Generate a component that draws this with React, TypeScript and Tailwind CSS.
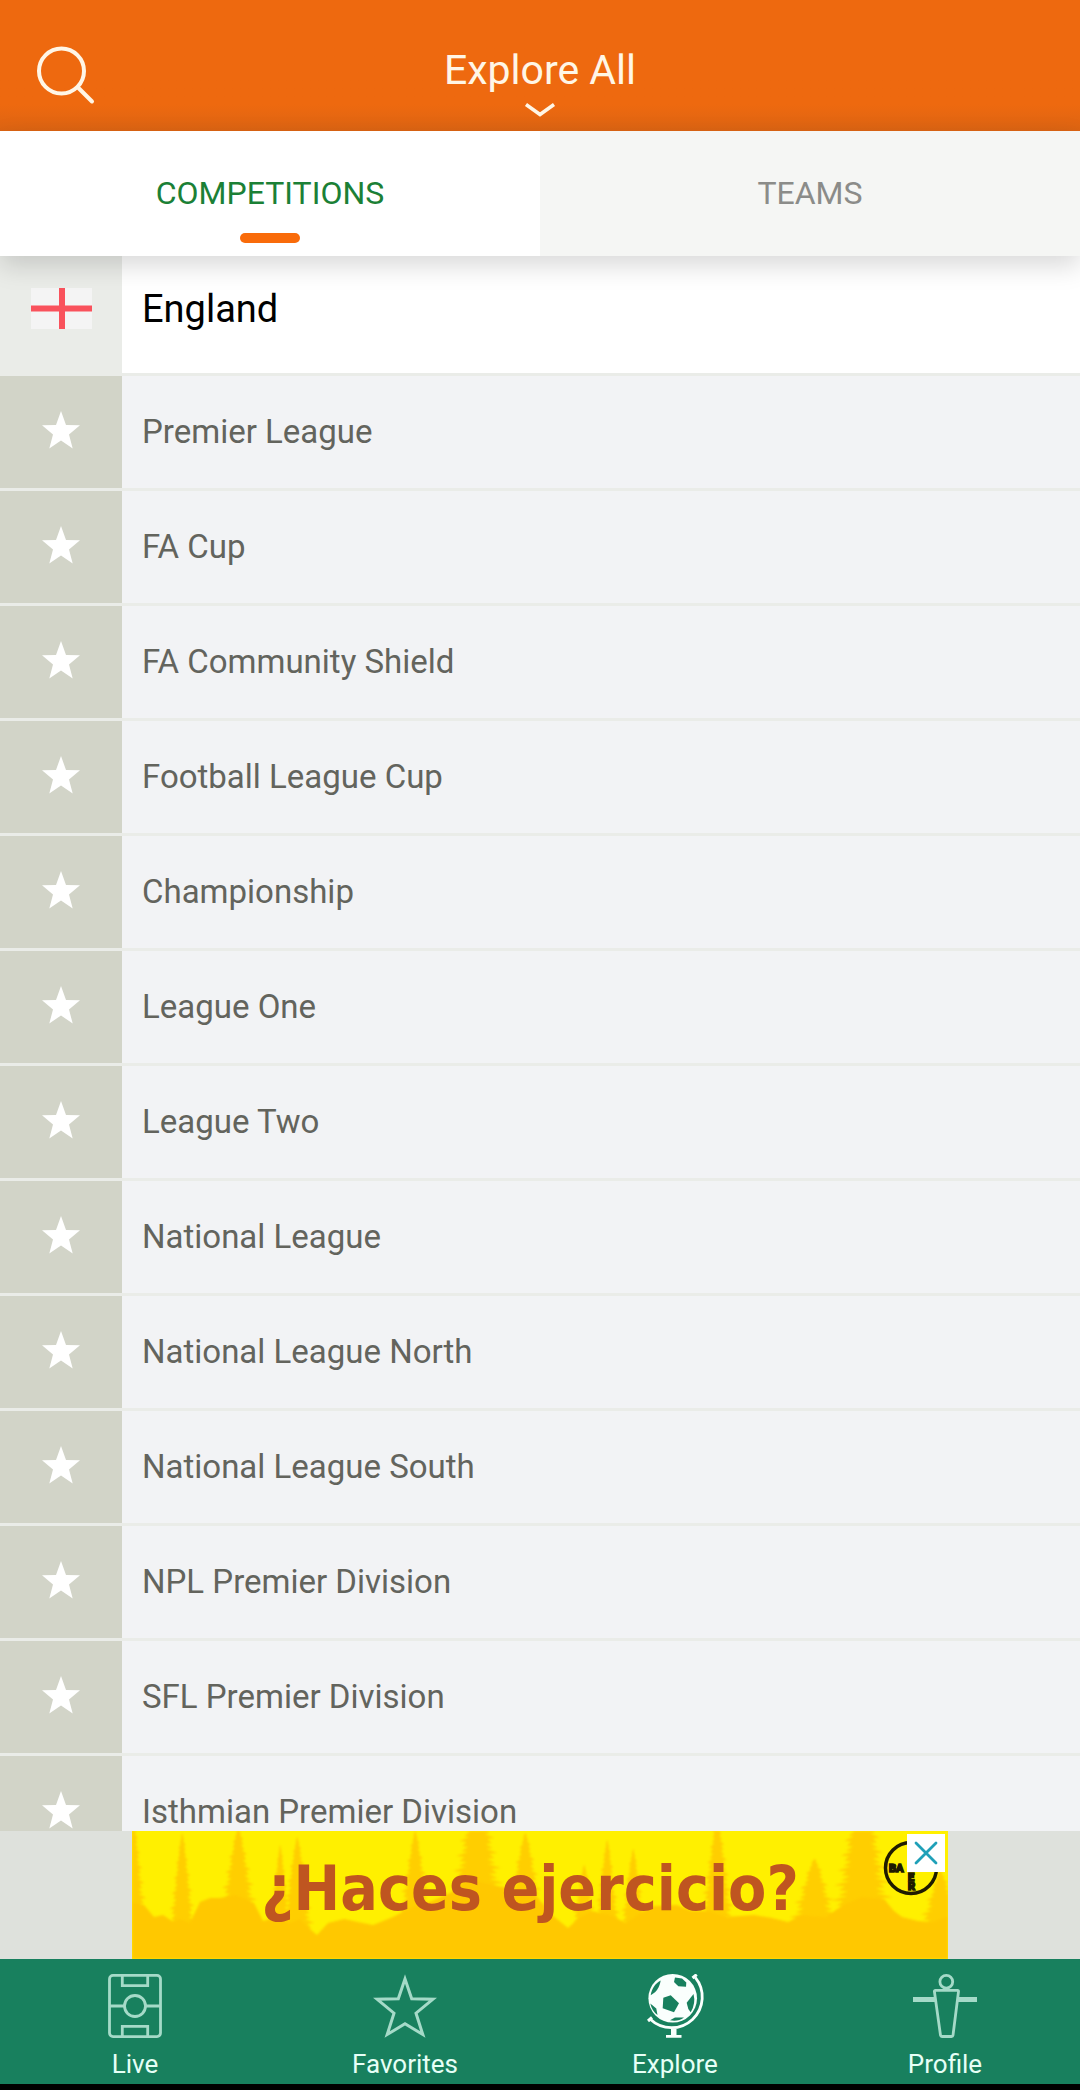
import { useState } from "react";
import type { ReactNode } from "react";
import clsx from "clsx";

const TABS = ["Competitions", "Teams"];

const COMPETITIONS = [
  "Premier League",
  "FA Cup",
  "FA Community Shield",
  "Football League Cup",
  "Championship",
  "League One",
  "League Two",
  "National League",
  "National League North",
  "National League South",
  "NPL Premier Division",
  "SFL Premier Division",
  "Isthmian Premier Division",
];

// [center x, top y, base y, half width]
const TREES = [
  [0, -20, 100, 18],
  [50, 2, 98, 15],
  [106, -4, 92, 23],
  [148, 14, 98, 12],
  [165, 6, 100, 18],
  [283, 0, 96, 20],
  [345, -50, 90, 34],
  [393, 2, 96, 24],
  [452, 34, 96, 14],
  [475, 9, 100, 15],
  [501, 18, 100, 15],
  [585, -14, 98, 20],
  [682, 28, 96, 28],
  [730, -50, 94, 36],
  [808, 40, 98, 24],
];

// ragged conifer outline: each branch tip juts out of the trunk side
function treePoints([cx, top, base, half]: number[]) {
  const steps = Math.round((base - top) / 5);
  const left: string[] = [];
  const right: string[] = [];
  for (let i = 1; i <= steps; i++) {
    const y = top + ((base - top) * i) / steps;
    const w = half * Math.pow(i / steps, 0.8) * (i % 3 ? 0.8 : 1);
    left.push(`${cx - w},${y}`, `${cx - w * 0.6},${y + 1}`);
    right.unshift(`${cx + w * 0.6},${y - 2}`, `${cx + w},${y - 3}`);
  }
  return [`${cx},${top}`, ...left, ...right].join(" ");
}

function SearchIcon() {
  return (
    <svg viewBox="0 0 60 60" className="size-15" fill="none" stroke="#fff6e6" strokeWidth="4" strokeLinecap="round">
      <circle cx="25.500" cy="26" r="22.500" />
      <path d="M42 42.500 56 56.500" />
    </svg>
  );
}

function PitchIcon() {
  return (
    <svg viewBox="0 0 64 64" className="size-16" fill="none" stroke="#a5dac8" strokeWidth="2.8">
      <rect x="6.500" y="1.400" width="51" height="61.200" rx="3.500" />
      <path d="M19.300 1.500v10.200h25.400V1.500M19.300 62.500V52.300h25.400v10.200M6.500 32h14.700M42.800 32h14.700" />
      <circle cx="32" cy="32" r="10.500" />
    </svg>
  );
}

function StarOutlineIcon() {
  return (
    <svg viewBox="0 0 64 64" className="size-16" fill="none" stroke="#a5dac8" strokeWidth="3">
      <path d="M32 5 38.700 24.800 60 25.200 43 39.200 49.800 60.500 32 49.800 14.200 60.500 21 39.200 4 25.200 25.300 24.800Z" />
    </svg>
  );
}

function GlobeIcon() {
  return (
    <svg viewBox="0 0 64 64" className="size-16">
      <circle cx="29.700" cy="24.300" r="24.300" fill="#fafffd" />
      <g fill="#18805e">
        <path d="M27.700 21.300 36 29.300 31 38.300 19.700 34.300 20.300 23.700Z" />
        <path d="M32 3.500 39 4.500 43.300 8.500 43 12.700 35.300 12.300 31 8Z" />
        <path d="M17.700 6.500C12 9.500 8.500 15 7.700 21.300L12 18.300Q16.500 14 17.700 6.500Z" />
        <path d="M50.500 20Q53 29.500 47.700 38.300L45.300 35 43.700 28.700Z" />
        <path d="M41 43.500Q35 48 27 46.300L32 43.500Z" />
        <path d="M7.300 29.500Q9 37 14.500 41L13.300 34.500Z" />
      </g>
      <path d="M52.200 3.300A30.800 30.800 0 0 1 7.300 45.300" fill="none" stroke="#fafffd" strokeWidth="2.8" />
      <path d="m49.500 4 4.200-3.500M5 47l4-3.500" stroke="#fafffd" strokeWidth="3" />
      <path d="M28 54.500h5.500V61h5v2.800H23V61h5Z" fill="#fafffd" />
    </svg>
  );
}

function PlayerIcon() {
  return (
    <svg viewBox="0 0 64 64" className="size-16" fill="none" stroke="#a5dac8" strokeWidth="2.8">
      <circle cx="33.300" cy="7.800" r="6.400" />
      <path d="M22.500 16.300h22a1 1 0 0 1 1 1.200L40 61.300a1.500 1.500 0 0 1-1.500 1.200h-9.500a1.500 1.500 0 0 1-1.500-1.200L21.400 17.500a1 1 0 0 1 1.100-1.200Z" />
      <path d="M0 25.500h22M45 25.500h19" strokeWidth="5" />
    </svg>
  );
}

const NAV_ITEMS: { label: string; icon: ReactNode }[] = [
  { label: "Live", icon: <PitchIcon /> },
  { label: "Favorites", icon: <StarOutlineIcon /> },
  { label: "Explore", icon: <GlobeIcon /> },
  { label: "Profile", icon: <PlayerIcon /> },
];

function Header() {
  return (
    <header className="grid shrink-0 grid-cols-[1fr_auto_1fr] items-start bg-linear-to-b from-[#ee690f] from-80% to-[#dc6413] px-9 pt-[45px] pb-3">
      <button aria-label="Search" className="w-fit">
        <SearchIcon />
      </button>
      <button className="flex flex-col items-center gap-2 text-[41px] leading-[50px] text-[#fff6e6]">
        Explore All
        <svg viewBox="0 0 32 16" className="h-4 w-8" fill="none" stroke="#fff6e6" strokeWidth="3.500">
          <path d="M2 1.500 16 11.500 30 1.500" />
        </svg>
      </button>
    </header>
  );
}

function Tabs() {
  const [active, setActive] = useState("Competitions");

  return (
    <div role="tablist" className="z-10 grid shrink-0 grid-cols-2 shadow-[0_10px_24px_rgba(0,0,0,0.15)]">
      {TABS.map((tab) => (
        <button
          key={tab}
          role="tab"
          aria-selected={tab === active}
          onClick={() => setActive(tab)}
          className={clsx(
            "flex flex-col items-center gap-[18px] pt-10 pb-[13px] text-[32px] leading-[44px] uppercase",
            tab === active ? "bg-white text-[#1b8036]" : "bg-[#f5f6f4] text-[#8b8c89]"
          )}
        >
          {tab}
          <span className={clsx("h-2.5 w-15 rounded-full", tab === active && "bg-[#f96b0a]")} />
        </button>
      ))}
    </div>
  );
}

function CompetitionList() {
  return (
    <main className="min-h-0 flex-1 overflow-hidden bg-[#eaece8]">
      <h2 className="mb-[3px] flex h-[117px] text-[38px] text-black">
        <span className="flex w-[122px] items-center justify-center pb-3">
          <svg viewBox="0 0 61 41" className="h-[41px] w-[61px]" role="img" aria-label="Flag of England">
            <path d="M0 0h61v41H0Z" fill="#f4f4f4" />
            <path d="M28 0h6v41h-6ZM0 17.500h61v6H0Z" fill="#f9525c" />
          </svg>
        </span>
        <span className="flex flex-1 items-center bg-white pb-2.5 pl-5">England</span>
      </h2>
      <ul className="flex flex-col gap-[3px]">
        {COMPETITIONS.map((name) => (
          <li key={name} className="flex h-28 shrink-0">
            <button
              aria-label={`Follow ${name}`}
              className="flex w-[122px] items-center justify-center bg-[#d2d4c8] pb-1"
            >
              <svg viewBox="0 0 38 38" className="size-[38px]" fill="#fff">
                <path d="M19 0 24 14 38 14.300 27 23.500 30.700 37.500 19 29.500 7.300 37.500 11 23.500 0 14.300 14 14Z" />
              </svg>
            </button>
            <a href="#" className="flex flex-1 items-center bg-[#f2f3f5] pl-5 text-[33px] text-[#63645d]">
              {name}
            </a>
          </li>
        ))}
      </ul>
    </main>
  );
}

function AdBanner() {
  return (
    <aside className="flex shrink-0 justify-center bg-[#dee1dc]">
      <div className="relative flex h-32 w-[816px] items-center justify-center overflow-hidden bg-[#fff000]">
        <svg viewBox="0 0 816 128" className="absolute inset-0 size-full blur-[1px]" fill="#ffc800">
          <g opacity="0.85">
            {TREES.map((tree) => (
              <polygon key={tree[0]} points={treePoints(tree)} />
            ))}
          </g>
          <path d="M-4 70 12 74 22 86 31 84 40 90 48 88 58 92 68 71 78 67 88 67 104 64 122 72 131 90 145 86 158 92 168 88 178 98 185 104 196 92 212 88 226 91 241 94 261 86 280 76 300 70 318 62 338 48 370 56 400 60 420 84 436 97 448 86 460 80 478 84 494 92 508 82 522 75 545 74 560 80 578 80 594 86 622 84 640 87 656 91 670 84 694 86 711 74 730 66 752 68 762 80 770 86 786 90 800 91 820 84V132H-4Z" />
        </svg>
        <a
          href="#"
          className="relative pr-5 pb-3 text-[62px] leading-[72px] font-bold whitespace-nowrap text-[#bf5520] [font-family:'DejaVu_Sans_Condensed','DejaVu_Sans',sans-serif]"
        >
          ¿Haces ejercicio?
        </a>
        <svg viewBox="0 0 56 56" className="absolute top-[9px] right-[9px] size-14" fill="#1f1b00">
          <circle cx="28" cy="28" r="25.500" fill="none" stroke="#1f1b00" strokeWidth="3.500" />
          <text x="6" y="32" fontSize="11" fontWeight="900" stroke="#1f1b00" strokeWidth="1.5">
            BA
          </text>
          <text x="25" y="41" fontSize="11" fontWeight="900" stroke="#1f1b00" strokeWidth="1.5">
            E
          </text>
          <text x="25" y="50" fontSize="11" fontWeight="900" stroke="#1f1b00" strokeWidth="1.5">
            R
          </text>
        </svg>
        <button
          aria-label="Close ad"
          className="absolute top-[3px] right-[3px] flex size-[38px] items-center justify-center bg-white"
        >
          <svg viewBox="0 0 24 24" className="size-6" stroke="#1fa0b8" strokeWidth="2.800" strokeLinecap="round">
            <path d="M2 2 22 22M22 2 2 22" />
          </svg>
        </button>
      </div>
    </aside>
  );
}

function BottomNav() {
  return (
    <nav className="grid shrink-0 grid-cols-4 border-b-6 border-black bg-[#18805e] pt-[15px]">
      {NAV_ITEMS.map(({ label, icon }) => (
        <a
          key={label}
          href="#"
          className="flex flex-col items-center gap-[9px] pb-[3px] text-[26px] leading-[34px] text-[#e6fff6]"
        >
          {icon}
          {label}
        </a>
      ))}
    </nav>
  );
}

export default function App() {
  return (
    <div className="flex h-screen flex-col overflow-hidden [font-family:Roboto,sans-serif]">
      <Header />
      <Tabs />
      <CompetitionList />
      <AdBanner />
      <BottomNav />
    </div>
  );
}
